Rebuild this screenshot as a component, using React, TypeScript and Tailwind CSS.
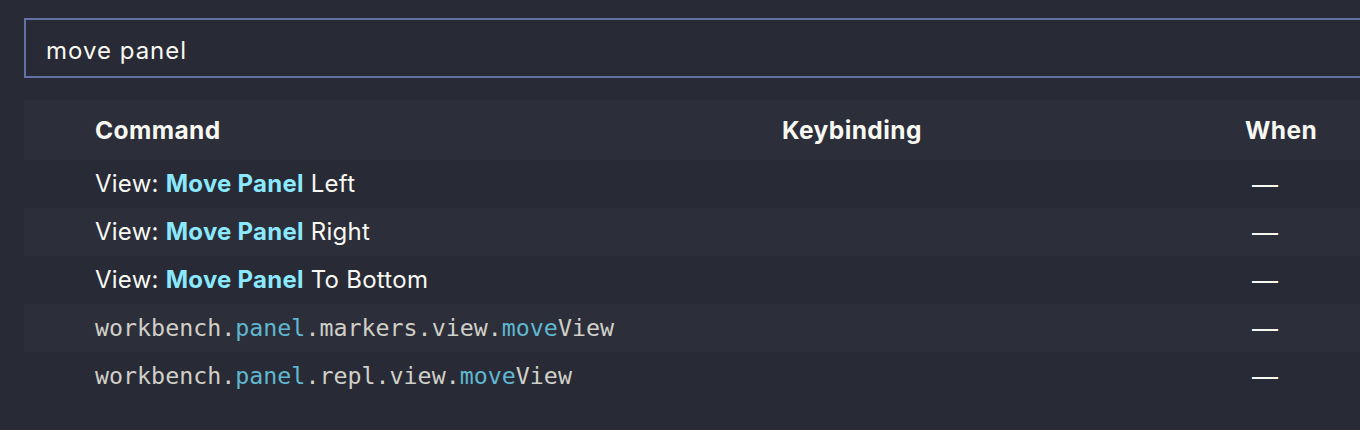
import React from 'react';

type Part = { text: string; hit?: boolean };

type Row = {
  parts: Part[];
  mono?: boolean;
};

const rows: Row[] = [
  { parts: [{ text: 'View: ' }, { text: 'Move Panel', hit: true }, { text: ' Left' }] },
  { parts: [{ text: 'View: ' }, { text: 'Move Panel', hit: true }, { text: ' Right' }] },
  { parts: [{ text: 'View: ' }, { text: 'Move Panel', hit: true }, { text: ' To Bottom' }] },
  {
    mono: true,
    parts: [
      { text: 'workbench.' },
      { text: 'panel', hit: true },
      { text: '.markers.view.' },
      { text: 'move', hit: true },
      { text: 'View' },
    ],
  },
  {
    mono: true,
    parts: [
      { text: 'workbench.' },
      { text: 'panel', hit: true },
      { text: '.repl.view.' },
      { text: 'move', hit: true },
      { text: 'View' },
    ],
  },
];

const sans = "font-['Inter','Noto_Sans',sans-serif]";
const mono = "font-['DejaVu_Sans_Mono','Liberation_Mono',monospace]";

export default function App() {
  return (
    <div className={`h-[430px] w-[1360px] overflow-hidden bg-[#282a36] pl-6 pt-[18px] text-[#f8f8f2] ${sans}`}>
      {/* Search box */}
      <div className="flex h-[60px] w-[1400px] items-center border-2 border-[#6272a4] pl-[20px] pt-[6px] text-[24px] tracking-[1px]">
        move panel
      </div>

      {/* Table */}
      <div className="mt-[22px] w-[1400px]">
        <div className="flex h-[60px] items-center bg-[#2c2e3a] text-[24.5px] font-bold tracking-[0.4px]">
          <div className="w-[758px] pl-[71px]">Command</div>
          <div className="w-[463px]">Keybinding</div>
          <div>When</div>
        </div>

        {rows.map((row, i) => (
          <div
            key={i}
            className={`flex h-12 items-center ${i % 2 === 1 ? 'bg-[#2c2e3a]' : ''}`}
          >
            <div
              className={`w-[758px] pl-[71px] ${
                row.mono ? `${mono} text-[23.3px] text-[#d0d0c8]` : 'text-[24px] tracking-[0.25px]'
              }`}
            >
              {row.parts.map((p, j) =>
                p.hit ? (
                  <span
                    key={j}
                    className={row.mono ? 'text-[#5fb8d0]' : 'font-bold text-[#8be9fd]'}
                  >
                    {p.text}
                  </span>
                ) : (
                  <span key={j}>{p.text}</span>
                )
              )}
            </div>
            <div className="w-[463px]" />
            <div className="pl-[7px] text-[26px]">—</div>
          </div>
        ))}
      </div>
    </div>
  );
}
